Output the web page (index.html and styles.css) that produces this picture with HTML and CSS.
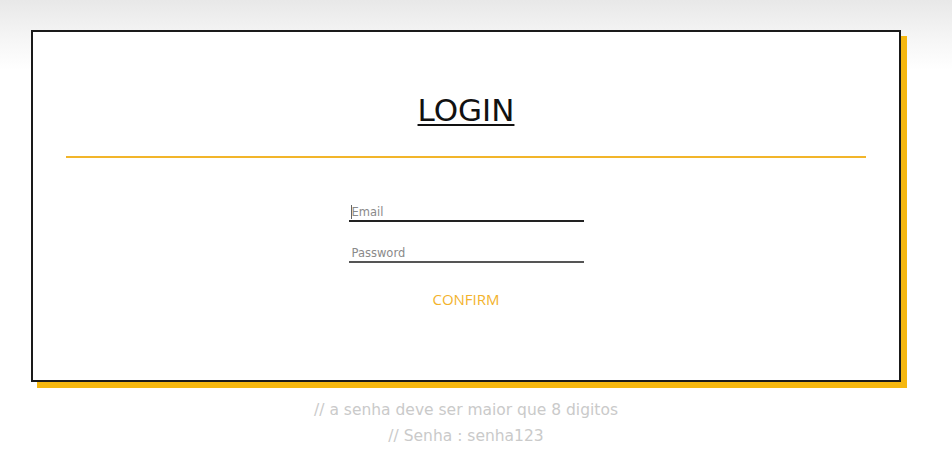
FILE: index.html
```html
<!DOCTYPE html>
<html lang="pt">
<head>
<meta charset="utf-8">
<title>Login</title>
<link rel="stylesheet" href="styles.css">
</head>
<body>
<div class="page">
  <div class="card">
    <h1 class="title">LOGIN</h1>
    <div class="rule"></div>
    <form class="form">
      <div class="field field-email">
        <span class="caret"></span>
        <input class="input input-email" type="email" placeholder="Email">
      </div>
      <div class="field field-pass">
        <input class="input input-pass" type="password" placeholder="Password">
      </div>
      <button class="confirm" type="button">CONFIRM</button>
    </form>
  </div>
  <div class="notes">
    <p class="note">// a senha deve ser maior que 8 digitos</p>
    <p class="note">// Senha : senha123</p>
  </div>
</div>
</body>
</html>
```
FILE: styles.css
```css
html, body {
  margin: 0;
  padding: 0;
}
body {
  background: linear-gradient(to bottom, #e8e8e8 0px, #f6f6f6 40px, #ffffff 70px, #ffffff 100%);
  min-height: 464px;
  font-family: "DejaVu Sans", sans-serif;
}
.page {
  padding-top: 30px;
  padding-left: 31px;
  width: 870px;
}
.card {
  box-sizing: border-box;
  width: 870px;
  height: 352px;
  border: 2px solid #1a1a1a;
  background: #fff;
  box-shadow: 6px 6px 0 #f5b70f;
  padding: 0 33px;
  display: flex;
  flex-direction: column;
  align-items: center;
}
.title {
  margin: 60px 0 0;
  font-family: "DejaVu Sans", sans-serif;
  font-weight: normal;
  font-size: 31px;
  line-height: 36px;
  color: #111;
  text-decoration: underline;
  text-decoration-thickness: 2px;
  text-underline-offset: 3px;
}
.rule {
  align-self: stretch;
  height: 2px;
  background: #f2b52a;
  margin-top: 28px;
}
.form {
  display: flex;
  flex-direction: column;
  align-items: center;
  margin-top: 44px;
}
.field {
  position: relative;
  width: 235px;
}
.field-pass {
  margin-top: 21px;
}
.input {
  display: block;
  box-sizing: border-box;
  width: 235px;
  height: 20px;
  margin: 0;
  padding: 1px 0 0 3px;
  border: 0;
  border-bottom: 2px solid #222;
  outline: none;
  background: transparent;
  font-family: "DejaVu Sans", sans-serif;
  font-size: 11.5px;
  color: #333;
}
.input-pass {
  border-bottom-color: #555;
}
.input::placeholder {
  color: #8a8a8a;
}
.caret {
  position: absolute;
  left: 2px;
  top: 3px;
  width: 1px;
  height: 14px;
  background: #666;
}
.confirm {
  margin-top: 26px;
  padding: 0;
  border: 0;
  background: transparent;
  font-family: "Open Sans", sans-serif;
  font-size: 15px;
  line-height: 20px;
  color: #f3b32c;
  cursor: pointer;
}
.notes {
  margin-top: 15px;
  text-align: center;
}
.note {
  margin: 0;
  font-family: "DejaVu Sans", sans-serif;
  font-size: 15.5px;
  line-height: 26px;
  color: #cacaca;
}
```
